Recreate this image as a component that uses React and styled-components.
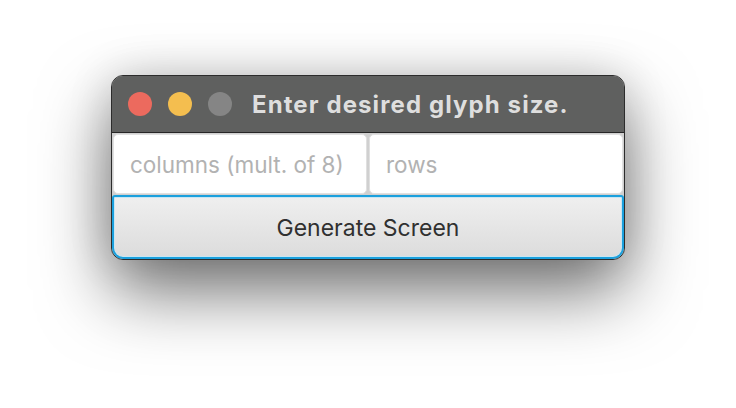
import React from "react";
import styled, { createGlobalStyle } from "styled-components";

const Global = createGlobalStyle`
  html, body { margin: 0; padding: 0; background: #ffffff; }
  body { font-family: Inter, "Noto Sans", "Liberation Sans", sans-serif; }
`;

const Page = styled.div`
  width: 736px;
  height: 408px;
  display: flex;
  justify-content: center;
  align-items: flex-start;
  padding-top: 75px;
  box-sizing: border-box;
`;

const Window = styled.div`
  width: 514px;
  box-sizing: border-box;
  border: 1px solid #2c2c2c;
  border-radius: 12px;
  overflow: hidden;
  background: #d2d2d2;
  box-shadow: 0 32px 70px rgba(0, 0, 0, 0.55), 0 0 45px rgba(0, 0, 0, 0.14);
  display: flex;
  flex-direction: column;
`;

const TitleBar = styled.div`
  height: 56px;
  background: #5f605f;
  border-bottom: 1px solid #262626;
  display: flex;
  align-items: center;
  padding-left: 16px;
  gap: 16px;
`;

const Light = styled.span`
  width: 24px;
  height: 24px;
  border-radius: 50%;
  background: ${(p) => p.$color};
  flex: none;
`;

const Title = styled.div`
  margin-left: 4px;
  color: #dedede;
  font-weight: 700;
  font-size: 24px;
  letter-spacing: 1.1px;
`;

const FieldRow = styled.div`
  display: grid;
  grid-template-columns: 1fr 1fr;
  gap: 2px;
  padding: 1px;
  background: #d0d0d0;
`;

const Field = styled.input`
  height: 60px;
  box-sizing: border-box;
  border: 1px solid #e0e0e0;
  border-radius: 5px;
  background: #ffffff;
  padding: 0 0 0 16px;
  font-family: Inter, "Noto Sans", "Liberation Sans", sans-serif;
  font-size: 22.5px;
  color: #333;
  outline: none;
  min-width: 0;
  &::placeholder { color: #b2b2b2; }
`;

const Button = styled.button`
  height: 64px;
  box-sizing: border-box;
  border: 2px solid #1ba0dd;
  border-radius: 3px 3px 11px 11px;
  box-shadow: inset 0 0 0 1px #c8e6f3;
  background: linear-gradient(#efefef, #dcdcdc);
  font-family: Inter, "Noto Sans", "Liberation Sans", sans-serif;
  font-size: 23px;
  color: #303030;
  padding: 2px 0 0 0;
`;

export default function App() {
  return (
    <>
      <Global />
      <Page>
        <Window>
          <TitleBar>
            <Light $color="#ec6a5e" />
            <Light $color="#f4be4f" />
            <Light $color="#858585" />
            <Title>Enter desired glyph size.</Title>
          </TitleBar>
          <FieldRow>
            <Field placeholder="columns (mult. of 8)" />
            <Field placeholder="rows" />
          </FieldRow>
          <Button>Generate Screen</Button>
        </Window>
      </Page>
    </>
  );
}
